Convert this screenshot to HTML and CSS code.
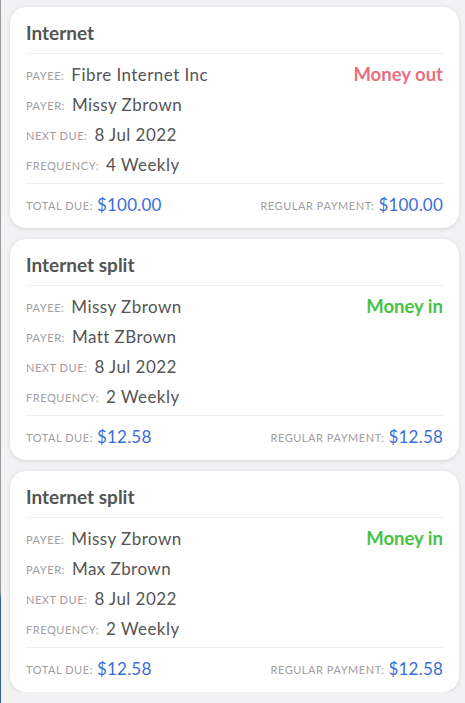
FILE: index.html
```html
<!DOCTYPE html>
<html>
<head>
<meta charset="utf-8">
<link rel="stylesheet" href="styles.css">
</head>
<body>
<div class="edge"></div>
<main class="list">
  <section class="card">
    <h2 class="title">Internet</h2>
    <div class="rows">
      <div class="row"><span class="label">Payee:</span><span class="value">Fibre Internet Inc</span><span class="dir out">Money out</span></div>
      <div class="row"><span class="label">Payer:</span><span class="value">Missy Zbrown</span></div>
      <div class="row"><span class="label">Next due:</span><span class="value">8 Jul 2022</span></div>
      <div class="row"><span class="label">Frequency:</span><span class="value">4 Weekly</span></div>
    </div>
    <div class="foot">
      <div class="amt"><span class="label">Total due:</span><span class="money">$100.00</span></div>
      <div class="amt"><span class="label">Regular payment:</span><span class="money">$100.00</span></div>
    </div>
  </section>
  <section class="card">
    <h2 class="title">Internet split</h2>
    <div class="rows">
      <div class="row"><span class="label">Payee:</span><span class="value">Missy Zbrown</span><span class="dir in">Money in</span></div>
      <div class="row"><span class="label">Payer:</span><span class="value">Matt ZBrown</span></div>
      <div class="row"><span class="label">Next due:</span><span class="value">8 Jul 2022</span></div>
      <div class="row"><span class="label">Frequency:</span><span class="value">2 Weekly</span></div>
    </div>
    <div class="foot">
      <div class="amt"><span class="label">Total due:</span><span class="money">$12.58</span></div>
      <div class="amt"><span class="label">Regular payment:</span><span class="money">$12.58</span></div>
    </div>
  </section>
  <section class="card">
    <h2 class="title">Internet split</h2>
    <div class="rows">
      <div class="row"><span class="label">Payee:</span><span class="value">Missy Zbrown</span><span class="dir in">Money in</span></div>
      <div class="row"><span class="label">Payer:</span><span class="value">Max Zbrown</span></div>
      <div class="row"><span class="label">Next due:</span><span class="value">8 Jul 2022</span></div>
      <div class="row"><span class="label">Frequency:</span><span class="value">2 Weekly</span></div>
    </div>
    <div class="foot">
      <div class="amt"><span class="label">Total due:</span><span class="money">$12.58</span></div>
      <div class="amt"><span class="label">Regular payment:</span><span class="money">$12.58</span></div>
    </div>
  </section>
</main>
</body>
</html>
```
FILE: styles.css
```css
html, body {
  margin: 0;
  padding: 0;
  background: #f2f2f4;
  font-family: Lato, "Open Sans", sans-serif;
}
.edge {
  position: fixed;
  left: 0;
  top: 0;
  width: 1px;
  height: 100%;
  background: linear-gradient(to bottom, #9a9a9a 0, #9a9a9a 590px, #2d5f99 600px, #2d5f99 100%);
}
.list {
  display: flex;
  flex-direction: column;
  gap: 11px;
  padding: 7px 6px 0 10px;
}
.card {
  background: #fff;
  border-radius: 16px;
  box-shadow: 0 1px 4px rgba(0,0,0,0.12);
  padding: 17px 16px 14px 16px;
}
.title {
  margin: 0;
  font-size: 19px;
  line-height: 18px;
  font-weight: 700;
  color: #555;
  padding-bottom: 11px;
  border-bottom: 1px solid #eeeeee;
}
.rows {
  padding-top: 5px;
  padding-bottom: 4px;
  border-bottom: 1px solid #eeeeee;
}
.row {
  display: flex;
  align-items: center;
  height: 30px;
}
.label {
  font-size: 11px;
  text-transform: uppercase;
  letter-spacing: 0.55px;
  color: #a0a0a0;
  margin-right: 7px;
  padding-top: 2px;
}
.value {
  font-size: 17px;
  color: #555;
  letter-spacing: 0.45px;
}
.dir {
  margin-left: auto;
  font-size: 18.5px;
  font-weight: 700;
}
.dir.out { color: #e8707e; }
.dir.in { color: #46c246; }
.foot {
  display: flex;
  justify-content: space-between;
  align-items: center;
  padding-top: 10px;
  height: 20px;
}
.amt {
  display: flex;
  align-items: center;
}
.amt .label { margin-right: 4px; }
.money {
  font-size: 17px;
  color: #3a6fd6;
  letter-spacing: 0.2px;
}
```
